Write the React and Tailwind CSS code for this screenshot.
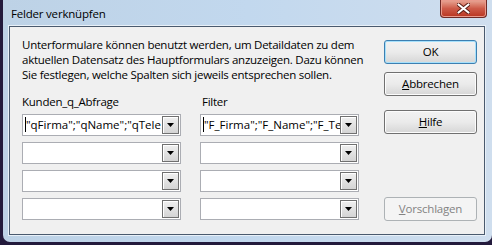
import React from 'react';

const font = { fontFamily: '"Open Sans", "Noto Sans", sans-serif' };

function Combo({ text }) {
  return (
    <div className="relative h-[22px] w-[159px] overflow-hidden border border-[#abadb3] bg-white">
      {text && <div className="absolute left-[2px] top-[2px] h-[15px] w-px bg-black" />}
      <div className="whitespace-nowrap pl-[3px] text-[11.5px] leading-[20px] text-black">{text}</div>
      <div className="absolute right-[1px] top-[1px] flex h-[18px] w-[17px] items-center justify-center border border-[#707070] bg-gradient-to-b from-[#f0f0f0] to-[#d4d4d4] shadow-[inset_1px_1px_0_#fff]">
        <svg width="7" height="4" viewBox="0 0 7 4"><path d="M0 0h7L3.5 4z" fill="#000" /></svg>
      </div>
    </div>
  );
}

function Btn({ children, ok, disabled }) {
  const cls = ok
    ? 'border-[#3c7fb1] shadow-[inset_0_0_0_1px_#a6e0fb]'
    : disabled
    ? 'border-[#adb2b5]'
    : 'border-[#707070] shadow-[inset_0_0_0_1px_#fcfcfc]';
  const bg = disabled ? 'bg-[#f4f4f4] text-[#838383]' : 'bg-gradient-to-b from-[#f2f2f2] via-[#ebebeb] to-[#d6d6d6] text-black';
  return (
    <div className={`flex h-[24px] w-[93px] items-center justify-center rounded-[3px] border text-[11.5px] tracking-[-0.2px] ${cls} ${bg}`}>
      {children}
    </div>
  );
}

export default function App() {
  return (
    <div className="h-[245px] w-[492px] overflow-hidden bg-[#231a3c]" style={font}>
      <div className="ml-[3px] h-[242px] w-[489px] rounded-b-[7px] bg-gradient-to-r from-[#bdd2e6] via-[#c2d8ee] to-[#cfdeee]">
        <div className="flex h-[26px] items-start justify-between">
          <div className="pl-[8px] pt-[6px] text-[11.5px] leading-[15px] tracking-[-0.2px] text-black">Felder verknüpfen</div>
          <div className="mr-[5px] flex h-[18px] w-[47px] items-center justify-center rounded-b-[4px] border border-t-0 border-[#6e2a26] bg-gradient-to-b from-[#e8a898] via-[#cd5a48] to-[#b8341f] shadow-[inset_0_0_0_1px_#e99a8c]">
            <svg width="13" height="11" viewBox="0 0 13 11">
              <path d="M1.5 1.5L11.5 9.5M11.5 1.5L1.5 9.5" stroke="#5a1c14" strokeWidth="4" strokeLinecap="round" />
              <path d="M1.5 1.5L11.5 9.5M11.5 1.5L1.5 9.5" stroke="#fff" strokeWidth="2.2" strokeLinecap="round" />
            </svg>
          </div>
        </div>
        <div className="ml-[6px] h-[209px] w-[476px] border border-[#4a5a6e] bg-[#f0f0f0] shadow-[0_0_0_1px_#e8f0f8]">
          <div className="flex">
            <div className="pl-[12px] pt-[10px]">
              <p className="whitespace-nowrap text-[11.5px] leading-[15px] tracking-[-0.25px] text-black">
                Unterformulare können benutzt werden, um Detaildaten zu dem<br />
                aktuellen Datensatz des Hauptformulars anzuzeigen. Dazu können<br />
                Sie festlegen, welche Spalten sich jeweils entsprechen sollen.
              </p>
              <div className="mt-[12px] flex text-[11.5px] leading-[15px] tracking-[-0.25px] text-black">
                <div className="w-[180px]">Kunden_q_Abfrage</div>
                <div>Filter</div>
              </div>
              <div className="mt-[5px] grid grid-cols-[159px_159px] gap-x-[19px] gap-y-[6px]">
                <Combo text={'"qFirma";"qName";"qTele'} />
                <Combo text={'"F_Firma";"F_Name";"F_Te'} />
                <Combo />
                <Combo />
                <Combo />
                <Combo />
                <Combo />
                <Combo />
              </div>
            </div>
            <div className="ml-auto mr-[7px] flex flex-col pt-[13px]">
              <Btn ok>OK</Btn>
              <div className="mt-[8px]"><Btn><span><u>A</u>bbrechen</span></Btn></div>
              <div className="mt-[14px]"><Btn><span><u>H</u>ilfe</span></Btn></div>
              <div className="mt-[63px]"><Btn disabled><span><u>V</u>orschlagen</span></Btn></div>
            </div>
          </div>
        </div>
      </div>
    </div>
  );
}
